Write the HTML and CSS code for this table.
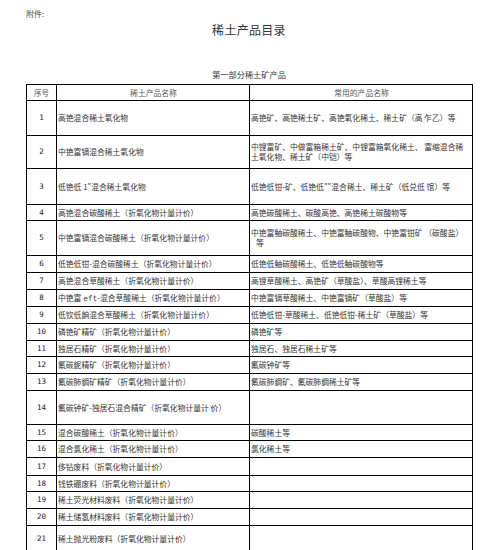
FILE: index.html
```html
<!DOCTYPE html>
<html lang="zh">
<head>
<meta charset="utf-8">
<title>稀土产品目录</title>
<link rel="stylesheet" href="styles.css">
</head>
<body>
<div class="page">
  <div class="attach">附件:</div>
  <h1 class="title">稀土产品目录</h1>
  <h2 class="subtitle">第一部分稀土矿产品</h2>
  <table class="catalog">
    <colgroup><col class="c1"><col class="c2"><col class="c3"></colgroup>
    <tr class="h16 head"><td class="num">序号</td><td class="center">稀土产品名称</td><td class="center">常用的产品名称</td></tr>
    <tr class="h35"><td class="num">1</td><td>高铯混合稀土氧化物</td><td>高铯矿、高铯稀土矿、高铯氧化稀土、稀土矿（高 乍乙）等</td></tr>
    <tr class="h33"><td class="num">2</td><td>中铯富镝混合稀土氧化物</td><td>中锂富矿、中做富箱稀土矿、中锂富箱氧化稀土、 富缩混合稀<br>土氧化物、稀土矿（中铠）等</td></tr>
    <tr class="h36"><td class="num">3</td><td>低铯低 1"混合稀土氧化物</td><td>低铯低钳-矿、低铯低""混合稀土、稀土矿（低兑低 馆）等</td></tr>
    <tr class="h16"><td class="num">4</td><td>高铯混合碳酸稀土（折氧化物计量计价）</td><td>高铯碳酸稀土、碳酸高铯、高铯稀土碳酸物等</td></tr>
    <tr class="h35"><td class="num">5</td><td>中铯富镝混合碳酸稀土（折氧化物计量计价）</td><td>中铯富鲉碳酸稀土、中铯富鲉碳酸物、中铯富钳矿 （碳酸盐）<br><span class="ind">等</span></td></tr>
    <tr class="h17"><td class="num">6</td><td>低铯低钳-混合碳酸稀土（折氧化物计量计价）</td><td>低铯低鲉碳酸稀土、低铯低鲉碳酸物等</td></tr>
    <tr class="h17"><td class="num">7</td><td>高铯混合草酸稀土（折氧化物计量计价）</td><td>高锂草酸稀土、高铯矿（草酸盐）、草酸高锂稀土等</td></tr>
    <tr class="h17"><td class="num">8</td><td>中铯富 <span class="mono">eft</span>-混合草酸稀土（折氧化物计量计价）</td><td>中铯富镝草酸稀土、中铯富镝矿（草酸盐）等</td></tr>
    <tr class="h17"><td class="num">9</td><td>低钦低餉混合草酸稀土（折氧化物计量计价）</td><td>低铯低钳-草酸稀土、低铯低钳-稀土矿（草酸盐）等</td></tr>
    <tr class="h17"><td class="num">10</td><td>磷铯矿精矿（折氧化物计量计价）</td><td>磷铯矿等</td></tr>
    <tr class="h16"><td class="num">11</td><td>独居石精矿（折氧化物计量计价）</td><td>独居石、独居石稀土矿等</td></tr>
    <tr class="h17"><td class="num">12</td><td>氟碳鈮精矿（折氧化物计量计价）</td><td>氟碳钟矿等</td></tr>
    <tr class="h17"><td class="num">13</td><td>氟碳肺鋼矿精矿（折氧化物计量计价）</td><td>氟碳肺鋼矿、氟碳肺鋼稀土矿等</td></tr>
    <tr class="h34"><td class="num">14</td><td>氟碳钟矿-独居石混合精矿（折氧化物计量计 价）</td><td></td></tr>
    <tr class="h16"><td class="num">15</td><td>混合碳酸稀土（折氧化物计量计价）</td><td>碳酸稀土等</td></tr>
    <tr class="h17"><td class="num">16</td><td>混合氯化稀土（折氧化物计量计价）</td><td>氯化稀土等</td></tr>
    <tr class="h18"><td class="num">17</td><td>侈钻废料（折氧化物计量计价）</td><td></td></tr>
    <tr class="h16"><td class="num">18</td><td>钱铁硼废料（折氧化物计量计价）</td><td></td></tr>
    <tr class="h17"><td class="num">19</td><td>稀土荧光材料废料（折氧化物计量计价）</td><td></td></tr>
    <tr class="h17"><td class="num">20</td><td>稀土储氢材料废料（折氧化物计量计价）</td><td></td></tr>
    <tr class="h24"><td class="num">21</td><td>稀土抛光粉废料（折氧化物计量计价）</td><td></td></tr>
  </table>
</div>
</body>
</html>
```
FILE: styles.css
```css
html, body {
  margin: 0;
  padding: 0;
  background: #fff;
}
body {
  font-family: "Noto Sans CJK SC", "Noto Sans", sans-serif;
  color: #333;
}
.page {
  padding: 9px 0 0 26px;
  width: 446px;
}
.attach {
  font-size: 8px;
  line-height: 10px;
  color: #444;
}
.title {
  margin: 3px 0 0 0;
  font-size: 12px;
  line-height: 16px;
  font-weight: 400;
  text-align: center;
  letter-spacing: 0.3px;
  color: #333;
}
.subtitle {
  margin: 31px 0 0 0;
  font-size: 8.2px;
  line-height: 10px;
  font-weight: 400;
  text-align: center;
  color: #333;
}
.catalog {
  margin-top: 5px;
  border-collapse: collapse;
  table-layout: fixed;
  width: 446px;
  font-size: 7.8px;
  line-height: 10px;
}
.c1 { width: 30px; }
.c2 { width: 193px; }
.c3 { width: 223px; }
.catalog td {
  border: 1px solid #000;
  padding: 0 0 0 1px;
  vertical-align: middle;
  white-space: nowrap;
  overflow: hidden;
}
.catalog td.num {
  text-align: center;
  padding: 0;
  font-family: "DejaVu Sans Mono", "Noto Sans CJK SC", monospace;
  font-size: 7.5px;
  color: #222;
}
.catalog .head td {
  color: #555;
  font-family: "Noto Sans CJK SC", sans-serif;
}
.catalog td.center { text-align: center; }
.mono { font-family: "DejaVu Sans Mono", monospace; }
.ind { padding-left: 5px; }
.h16 { height: 16px; }
.h17 { height: 17px; }
.h18 { height: 18px; }
.h24 { height: 26px; }
.h33 { height: 33px; }
.h34 { height: 34px; }
.h35 { height: 35px; }
.h36 { height: 36px; }
```
